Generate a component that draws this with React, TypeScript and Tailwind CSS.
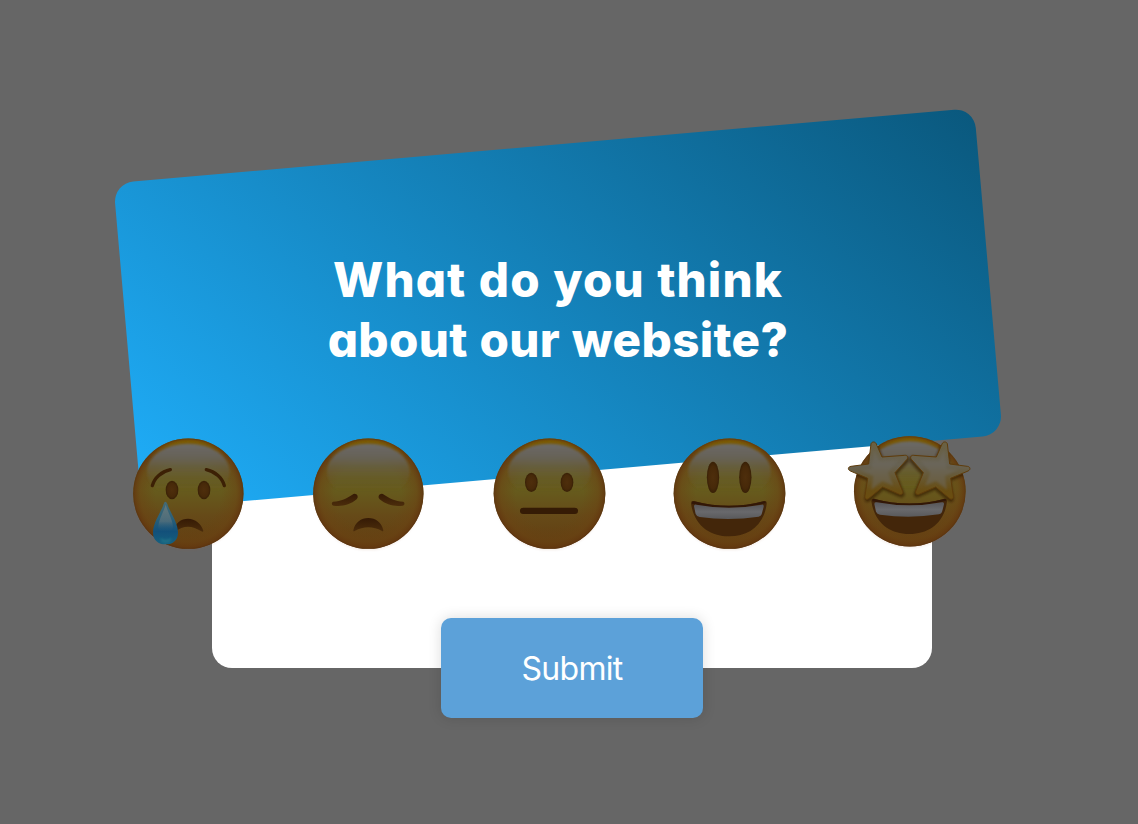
import React from "react";

function Palette() {
  return (
    <svg className="absolute size-0" aria-hidden="true">
      <defs>
        <linearGradient id="skin" x1="0" y1="0" x2="0" y2="1">
          <stop offset="0" stopColor="#7b5c0c" />
          <stop offset="0.2" stopColor="#685820" />
          <stop offset="0.47" stopColor="#665b1d" />
          <stop offset="0.7" stopColor="#664a18" />
          <stop offset="1" stopColor="#613c10" />
        </linearGradient>
        <radialGradient id="rim" cx="0.5" cy="0.5" r="0.5">
          <stop offset="0.6" stopColor="#6b4412" stopOpacity="0" />
          <stop offset="0.87" stopColor="#6b4212" stopOpacity="0.5" />
          <stop offset="0.97" stopColor="#64380f" stopOpacity="0.8" />
          <stop offset="1" stopColor="#59310f" stopOpacity="0.9" />
        </radialGradient>
        <linearGradient id="gold" x1="0" y1="0" x2="0" y2="1">
          <stop offset="0" stopColor="#7e5e06" />
          <stop offset="0.16" stopColor="#785a0a" stopOpacity="0" />
        </linearGradient>
        <linearGradient id="gloss" x1="0" y1="0" x2="0" y2="1">
          <stop offset="0" stopColor="#6b6a68" />
          <stop offset="0.25" stopColor="#66625a" stopOpacity="0.95" />
          <stop offset="0.85" stopColor="#665d20" stopOpacity="0" />
        </linearGradient>
        <linearGradient id="brown" x1="0" y1="0" x2="0" y2="1">
          <stop offset="0" stopColor="#351a05" />
          <stop offset="1" stopColor="#4c2d0b" />
        </linearGradient>
        <radialGradient id="eye">
          <stop offset="0" stopColor="#4e2e0c" />
          <stop offset="0.7" stopColor="#472909" />
          <stop offset="1" stopColor="#382006" />
        </radialGradient>
        <linearGradient id="teeth" x1="0" y1="0" x2="0" y2="1">
          <stop offset="0" stopColor="#565558" />
          <stop offset="0.5" stopColor="#69696c" />
          <stop offset="1" stopColor="#59595b" />
        </linearGradient>
        <linearGradient id="tear" x1="0" y1="0" x2="0" y2="1">
          <stop offset="0" stopColor="#456a74" />
          <stop offset="0.4" stopColor="#2a6079" />
          <stop offset="0.7" stopColor="#12507a" />
          <stop offset="1" stopColor="#17617f" />
        </linearGradient>
        <linearGradient id="tearShine" x1="0" y1="0" x2="0" y2="1">
          <stop offset="0" stopColor="#64787b" />
          <stop offset="0.6" stopColor="#546f7b" stopOpacity="0.8" />
          <stop offset="1" stopColor="#12507a" stopOpacity="0" />
        </linearGradient>
        <linearGradient id="star" x1="0" y1="0" x2="0" y2="1">
          <stop offset="0" stopColor="#6a6040" />
          <stop offset="0.4" stopColor="#676254" />
          <stop offset="0.62" stopColor="#675832" />
          <stop offset="0.85" stopColor="#684d12" />
          <stop offset="1" stopColor="#6b4d10" />
        </linearGradient>
        <filter id="soft" x="-20%" y="-20%" width="140%" height="140%">
          <feGaussianBlur stdDeviation="3.5" />
        </filter>
      </defs>
    </svg>
  );
}

type FaceProps = {
  label: string;
  cx?: number;
  cy?: number;
  rx?: number;
  children: React.ReactNode;
};

function Face({ label, cx = 205, cy = 206, rx = 166, children }: FaceProps) {
  return (
    <button type="button" aria-label={label} className="block size-[140px] shrink-0">
      <svg viewBox="0 0 420 420" className="size-full">
        <ellipse cx={cx} cy={cy + 5} rx={rx - 3} ry="165" fill="#a06040" opacity="0.1" filter="url(#soft)" />
        <ellipse cx={cx} cy={cy} rx={rx - 0.5} ry="165.5" fill="url(#skin)" />
        <ellipse cx={cx} cy={cy} rx={rx - 0.5} ry="165.5" fill="url(#rim)" />
        <ellipse cx={cx} cy={cy} rx={rx - 5} ry="161" fill="url(#gold)" filter="url(#soft)" />
        <ellipse cx={cx} cy={cy - 66} rx="124" ry="84" fill="url(#gloss)" filter="url(#soft)" />
        {children}
      </svg>
    </button>
  );
}

function Grin({ x, y }: { x: number; y: number }) {
  return (
    <g transform={`translate(${x} ${y})`}>
      <path d="M-114 -8 Q-114 -17 -104 -14 Q0 13 104 -14 Q114 -17 113 -7 C105 58 59 91 0 91 C-59 91 -105 57 -114 -8Z" fill="#43260a" />
      <path d="M-111 -11 Q-110 -16 -104 -14 Q0 13 104 -14 Q111 -16 110 -9 Q0 19 -111 -7Z" fill="#321707" />
      <path d="M-105 1 Q-105 -6 -98 -4 Q0 14 98 -4 Q105 -6 104 2 L98 25 Q96 31 89 32 Q0 46 -88 33 Q-97 31 -100 24Z" fill="url(#teeth)" />
    </g>
  );
}

const starPath =
  "M93 56 C96 49 106 49 109 57 L126 96 L194 91 C203 90 206 98 200 104 L165 143 L188 199 C191 207 183 211 176 207 L128 186 L87 220 C80 226 73 221 75 212 L83 160 L31 138 C22 134 24 125 33 124 L86 117Z";

const starCorePath = "M103 74 L118 108 L175 105 L144 143 L160 182 L127 168 L94 194 L100 153 L60 134 L95 131Z";

function Star() {
  return (
    <g>
      <path d={starPath} fill="url(#star)" stroke="#5f3c0b" strokeWidth="3" strokeLinejoin="round" />
      <path d={starCorePath} fill="#6d695f" opacity="0.5" filter="url(#soft)" />
    </g>
  );
}

function StarEyes() {
  return (
    <>
      <clipPath id="starFace">
        <ellipse cx="209.5" cy="199" rx="167" ry="165" />
      </clipPath>
      <g clipPath="url(#starFace)" opacity="0.65">
        <path d={starPath} fill="#351b04" stroke="#351b04" strokeWidth="6" transform="translate(2 6)" filter="url(#soft)" />
        <path d={starPath} fill="#351b04" stroke="#351b04" strokeWidth="6" transform="translate(413 6) scale(-1 1)" filter="url(#soft)" />
      </g>
      <Star />
      <g transform="translate(415 0) scale(-1 1)">
        <Star />
      </g>
    </>
  );
}

function Faces() {
  return (
    <>
      <Face label="Very sad">
        <path d="M97 182 C103 159 124 140 151 134" fill="none" stroke="#3c2005" strokeWidth="10" strokeLinecap="round" />
        <path d="M259 134 C286 140 307 159 313 182" fill="none" stroke="#3c2005" strokeWidth="10" strokeLinecap="round" />
        <ellipse cx="156" cy="195" rx="19" ry="28" fill="url(#eye)" />
        <ellipse cx="252" cy="195" rx="19" ry="28" fill="url(#eye)" />
        <path d="M161 319 C165 294 183 281 204 281 C226 281 244 296 250 317 Q250 322 244 319 C216 300 190 300 164 321 Q160 323 161 319Z" fill="url(#brown)" />
        <path d="M136 230 Q139 230 142 237 C149 260 174 292 174 323 C174 345 159 358 137 358 C115 358 99 345 99 323 C99 292 124 260 131 237 Q133 230 136 230Z" fill="url(#tear)" />
        <path d="M137 239 C145 265 159 286 159 307 C159 327 115 327 115 307 C115 286 129 265 137 239Z" fill="url(#tearShine)" />
        <path d="M120 338 Q137 350 155 338 Q153 353 137 353 Q122 353 120 338Z" fill="#25828f" opacity="0.5" filter="url(#soft)" />
      </Face>
      <Face label="Sad">
        <path d="M100 230 C123 229 141 220 157 209 C167 201 179 214 170 223 C151 239 125 246 101 242 C94 241 94 231 100 230Z" fill="url(#brown)" />
        <path d="M309 230 C286 229 268 220 252 209 C242 201 230 214 239 223 C258 239 284 246 308 242 C315 241 315 231 309 230Z" fill="url(#brown)" />
        <path d="M160 316 C165 292 183 279 205 279 C227 279 245 292 250 316 Q250 321 246 318 C219 303 191 303 164 318 Q160 321 160 316Z" fill="url(#brown)" />
      </Face>
      <Face label="Neutral" cx={208.5} rx={168}>
        <ellipse cx="154" cy="172" rx="19" ry="29" fill="url(#eye)" />
        <ellipse cx="261" cy="172" rx="19" ry="29" fill="url(#eye)" />
        <rect x="120" y="248" width="174" height="19" rx="9.5" fill="#351b05" />
      </Face>
      <Face label="Happy" cx={208.5} rx={168}>
        <ellipse cx="159" cy="157" rx="18.5" ry="47" fill="url(#eye)" />
        <ellipse cx="256" cy="157" rx="18.5" ry="47" fill="url(#eye)" />
        <Grin x={207} y={243} />
      </Face>
      <Face label="Delighted" cx={209.5} cy={199} rx={168}>
        <StarEyes />
        <Grin x={208} y={236} />
      </Face>
    </>
  );
}

export default function App() {
  return (
    <main className="h-[824px] w-[1138px] overflow-hidden bg-[#666666] pt-[200px] pl-[212px]">
      <Palette />
      <section className="relative flex h-[468px] w-[720px] flex-col items-center rounded-[20px] bg-white">
        <div className="absolute top-[-55px] left-[-86px] h-[328px] w-[864px] -rotate-5 rounded-[20px] bg-[linear-gradient(45deg,#1faefa,#0a587d)]" />
        <h1 className="relative mt-[50px] -ml-[28px] text-center font-['Inter'] text-[47.5px] leading-[60px] font-extrabold whitespace-nowrap text-white [font-feature-settings:'cv11']">
          <span className="block tracking-[1.1px] [word-spacing:1px]">What do you think</span>
          <span className="block tracking-[0.35px] [word-spacing:1px]">about our website?</span>
        </h1>
        <div className="relative mt-[55px] -ml-[44px] flex w-[860px] shrink-0 gap-10">
          <Faces />
        </div>
        <button
          type="button"
          className="relative mt-[53px] h-[100px] w-[262px] shrink-0 rounded-[10px] bg-[#5ca1d9] pt-0.5 font-['Inter'] text-[32px] font-normal tracking-[-0.7px] text-white shadow-[0_0_14px_rgba(0,0,0,0.14)]"
        >
          Submit
        </button>
      </section>
    </main>
  );
}
